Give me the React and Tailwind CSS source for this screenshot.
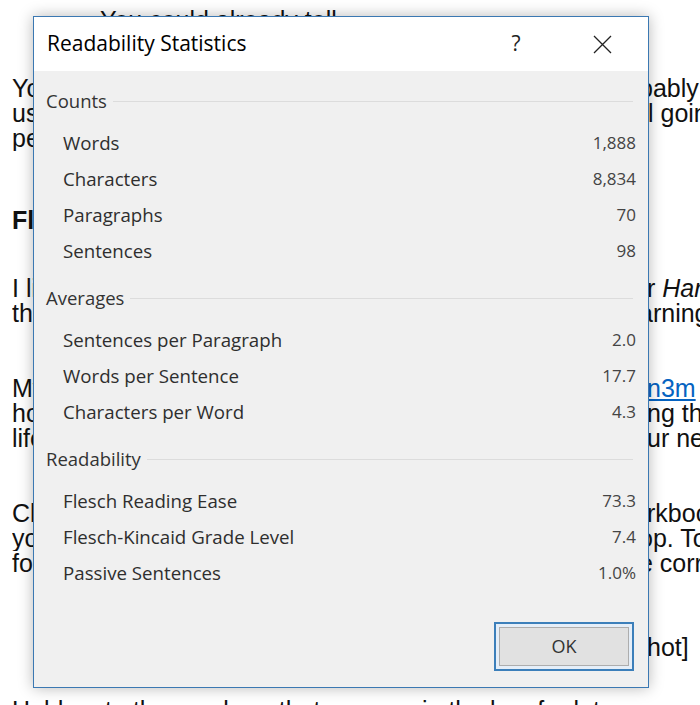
import React from 'react';

// one visual line of the word document behind the dialog;
// `split` is the width of the part that sits under the dialog
function Line({ className = '', left, right, split = 'w-[635px]' }) {
  return (
    <div className={`flex h-[25px] leading-[25px] whitespace-nowrap ${className}`}>
      <span className={`${split} shrink-0 overflow-hidden`}>{left}</span>
      <span>{right}</span>
    </div>
  );
}

const sections = [
  {
    title: 'Counts',
    rows: [
      ['Words', '1,888'],
      ['Characters', '8,834'],
      ['Paragraphs', '70'],
      ['Sentences', '98'],
    ],
  },
  {
    title: 'Averages',
    rows: [
      ['Sentences per Paragraph', '2.0'],
      ['Words per Sentence', '17.7'],
      ['Characters per Word', '4.3'],
    ],
  },
  {
    title: 'Readability',
    rows: [
      ['Flesch Reading Ease', '73.3'],
      ['Flesch-Kincaid Grade Level', '7.4'],
      ['Passive Sentences', '1.0%'],
    ],
  },
];

function Section({ title, rows, first }) {
  return (
    <div className={first ? '' : 'mt-[17px]'}>
      <div className="flex h-[24px] items-center">
        <span className="text-[18.5px] text-[#333]">{title}</span>
        <div className="ml-[6px] mr-[3px] h-px flex-1 bg-[#dcdcdc]" />
      </div>
      <div className="mt-[12px] pl-[17px]">
        {rows.map(([label, value]) => (
          <div key={label} className="flex h-[36px] items-center justify-between">
            <span className="text-[18.7px] text-[#2e2e2e]">{label}</span>
            <span className="text-[17px] text-[#444]">{value}</span>
          </div>
        ))}
      </div>
    </div>
  );
}

function ReadabilityDialog() {
  return (
    <div className="absolute left-[33px] top-[16px] flex h-[672px] w-[616px] flex-col border border-[#3b78b2] bg-[#f0f0f0] font-['Open_Sans','Noto_Sans',sans-serif] shadow-[0_0_14px_rgba(0,0,0,0.28)]">
      {/* title bar */}
      <div className="flex h-[54px] shrink-0 items-center bg-white pl-[13px] pr-[26px]">
        <span className="flex-1 text-[21px] text-black">Readability Statistics</span>
        <span className="w-[30px] text-center text-[21px] text-[#222]">?</span>
        <span className="ml-[51px] flex w-[40px] justify-center">
          <svg width="19" height="19" viewBox="0 0 19 19" fill="none" stroke="#222" strokeWidth="1.3">
            <path d="M1 1L18 18M18 1L1 18" />
          </svg>
        </span>
      </div>

      {/* body */}
      <div className="flex flex-1 flex-col px-[12px] pb-[16px] pt-[18px]">
        {sections.map((s, i) => (
          <Section key={s.title} {...s} first={i === 0} />
        ))}
        <div className="mt-auto flex justify-end pr-[2px]">
          <div className="h-[49px] w-[140px] border-2 border-[#3c7fba] bg-[#e5eef8] p-[3px]">
            <div className="flex h-full items-center justify-center border border-[#adadad] bg-[#e1e1e1] text-[18px] text-[#333]">
              OK
            </div>
          </div>
        </div>
      </div>
    </div>
  );
}

export default function App() {
  return (
    <div className="relative h-[705px] w-[700px] overflow-hidden bg-white">
      <div className="pl-[12px] font-['Liberation_Sans',Arial,sans-serif] text-[25px] text-[#111]">
        <Line className="mt-[8px]" left={<span className="pl-[88px]">You could already tell</span>} />
        <Line className="mt-[43px]" split="w-[627px]" left="You have written enough by now to get a feel for it, pro" right="bably useful" />
        <Line split="w-[636px]" left="use the checker once you have finished and are stil" right="l going over it" />
        <Line left="people tend to skip it." />
        <Line className="mt-[57px] font-bold" left="Flesch Reading Ease" />
        <Line
          className="mt-[43px]"
          left="I like to run it on anything I have written, even afte"
          right={<><span>r </span><span className="italic">Harry</span></>}
        />
        <Line split="w-[627px]" left="the text has been edited, as a kind of final check and le" right="arning" />
        <Line
          className="mt-[50px]"
          left="My favourite part is the link in the tool at https://bit.ly/2x"
          right={<span className="text-[#0563c1] underline">n3m</span>}
        />
        <Line left="how the score is worked out and what it means for writi" right="ng the" />
        <Line left="life of a page once it gets read by people who find yo" right="ur next" />
        <Line className="mt-[50px]" left="Click File, then Options, and open the Proofing tab in the wo" right="rkbook" />
        <Line split="w-[627px]" left="you will see the box that says show readability at the to" right="op. To" />
        <Line split="w-[627px]" left="for the settings to stick you have to turn them on in th" right="e correct" />
        <Line className="mt-[59px]" left="" right="hot]" />
        <Line className="mt-[38px]" left="Hold on to the numbers that you see in the box for later" />
      </div>
      <ReadabilityDialog />
    </div>
  );
}
